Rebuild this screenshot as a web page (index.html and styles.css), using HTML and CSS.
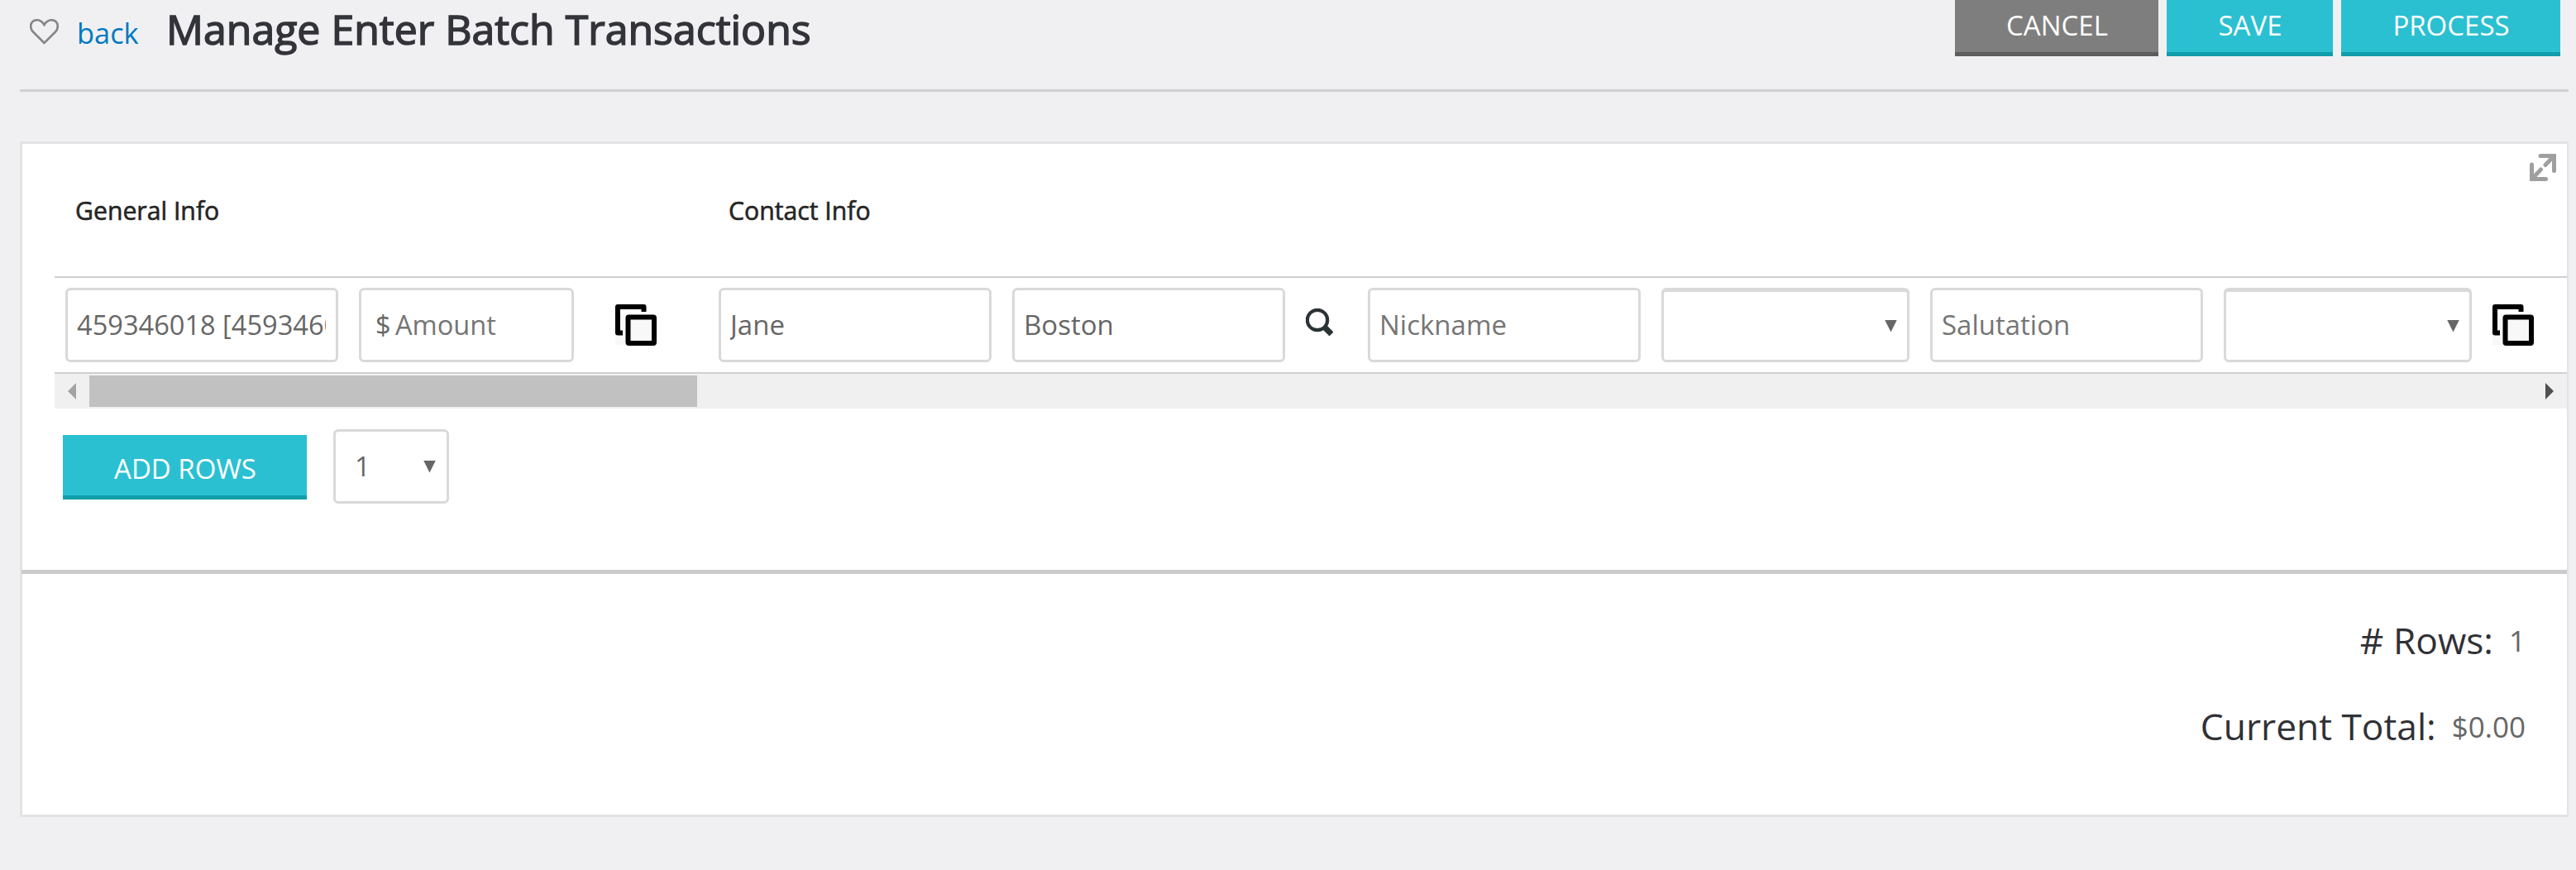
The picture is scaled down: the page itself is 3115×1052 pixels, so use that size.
FILE: index.html
```
<!DOCTYPE html>
<html lang="en">
<head>
<meta charset="utf-8">
<title>Manage Enter Batch Transactions</title>
<link rel="stylesheet" href="styles.css">
</head>
<body>
<svg class="defs" aria-hidden="true">
  <symbol id="copy" viewBox="0 0 50 50">
    <rect x="0" y="12" width="50" height="37" fill="#f8f8f8"/>
    <path d="M34.5 9V3H3v31.5h6" fill="none" stroke="#000" stroke-width="6" stroke-linejoin="round"/>
    <rect x="15.500" y="15.500" width="31.500" height="31.500" rx="1" fill="#f8f8f8" stroke="#000" stroke-width="6"/>
  </symbol>
</svg>
<header class="header">
  <svg class="heart" viewBox="0 0 35 31"><path d="M17.500 29 4 15.500C1.500 13 1.200 10.500 1.200 8.500 1.200 4.500 4 1.200 8.500 1.200c4.500 0 7 2.300 9 5.800 2-3.500 4.500-5.800 9-5.800 4.500 0 7.300 3.300 7.300 7.300 0 2-.3 4.500-2.800 7z"/></svg>
  <a class="back">back</a>
  <h1 class="title">Manage Enter Batch Transactions</h1>
  <div class="actions">
    <button class="btn btn-grey cancel">CANCEL</button>
    <button class="btn save">SAVE</button>
    <button class="btn process">PROCESS</button>
  </div>
</header>
<main class="card">
  <div class="groups">
    <span class="group-first">General Info</span>
    <span class="group-second">Contact Info</span>
    <svg class="expand" viewBox="0 0 32 33"><path d="M13 2.500h16.500v18M29 3 19 13.500M2.500 13v17.500h17M3 30 13.500 19"/><path class="tips" d="M20 0h12v12zM0 21v12h12z"/></svg>
  </div>
  <div class="row">
    <div class="field account"><span>459346018 [4593460</span></div>
    <div class="field amount"><span>$</span><span class="hint">Amount</span></div>
    <svg class="copy copy-first"><use href="#copy"/></svg>
    <div class="field"><span>Jane</span></div>
    <div class="field"><span>Boston</span></div>
    <svg class="search" viewBox="0 0 33 33"><path class="handle" d="m22 22 9 9"/><circle cx="14" cy="14" r="12.200"/></svg>
    <div class="field"><span class="hint">Nickname</span></div>
    <div class="field select"><i class="caret"></i></div>
    <div class="field"><span class="hint">Salutation</span></div>
    <div class="field select"><i class="caret"></i></div>
    <svg class="copy"><use href="#copy"/></svg>
  </div>
  <div class="scrollbar">
    <i class="arrow arrow-left"></i>
    <div class="thumb"></div>
    <i class="arrow arrow-right"></i>
  </div>
  <div class="add">
    <button class="btn add-rows">ADD ROWS</button>
    <div class="field count"><span>1</span><i class="caret"></i></div>
  </div>
  <div class="totals">
    <div class="total"><span class="label"># Rows:</span><span>1</span></div>
    <div class="total"><span class="label">Current Total:</span><span>$0.00</span></div>
  </div>
</main>
</body>
</html>
```
FILE: styles.css
```
* { box-sizing: border-box; }
body {
  margin: 0;
  padding: 0 9px 0 24px;
  background: #f0f0f2;
  font: 33px "Open Sans", sans-serif;
  color: #666;
}
svg { display: block; flex: none; }
.defs { width: 0; height: 0; position: absolute; }

.header {
  display: flex;
  align-items: flex-start;
  height: 111px;
  border-bottom: 3px solid #cfcfd2;
}
.heart {
  width: 35px;
  height: 31px;
  margin: 23px 0 0 12px;
  fill: none;
  stroke: #868686;
  stroke-width: 2.6;
}
.back {
  width: 108px;
  margin-left: 22px;
  font-size: 34.4px;
  line-height: 80px;
  color: #0079c1;
}
.title {
  margin: 0;
  font-size: 50px;
  font-weight: 400;
  line-height: 70px;
  color: #33343a;
  -webkit-text-stroke: 1.5px #33343a;
}
.actions {
  display: flex;
  gap: 10px;
  margin: 0 10px 0 auto;
}
.btn {
  height: 68px;
  padding: 0;
  border: 0;
  border-bottom: 5px solid #129dab;
  background: #2ac0d1;
  color: #fff;
  font: 33px/60px "Open Sans", sans-serif;
}
.btn-grey { background: #7e7e7e; border-color: #5e5e5e; }
.actions .btn { padding: 0 0 2px 1px; }
.cancel { width: 246px; }
.save { width: 201px; }
.process { width: 265px; }

.card {
  height: 817px;
  margin-top: 60px;
  border: 3px solid #e3e3e5;
  border-right-width: 2px;
  background: #fff;
}
.groups {
  display: flex;
  align-items: center;
  height: 162px;
  margin-left: 39px;
  padding: 0 13px 0 25px;
  border-bottom: 2px solid #d0d0d2;
  font-size: 30.2px;
  color: #252525;
  -webkit-text-stroke: .6px #252525;
}
.group-first { width: 790px; }
.expand {
  align-self: flex-start;
  width: 32px;
  height: 33px;
  margin: 12px 0 0 auto;
  fill: none;
  stroke: #9f9f9f;
  stroke-width: 5;
  stroke-linecap: round;
}
.tips { fill: #9f9f9f; stroke: none; }

.row {
  display: flex;
  align-items: center;
  gap: 25px;
  height: 116px;
  margin-left: 39px;
  padding-left: 13px;
  border-bottom: 2px solid #d0d0d2;
}
.field {
  display: flex;
  align-items: center;
  flex: none;
  width: 330px;
  height: 90px;
  padding: 0 12px 0 11px;
  border: 3px solid #d9d9d9;
  border-radius: 6px;
  background: #fff;
}
.field span {
  flex: 1;
  overflow: hidden;
  white-space: nowrap;
  line-height: 82px;
}
.field .hint { color: #757575; }
.account { font-size: 32.6px; }
.amount { width: 260px; padding-left: 17px; font-size: 32.6px; }
.amount span:first-child { flex: 0 0 24px; }
.select { width: 300px; border-top-width: 5px; }
.caret {
  width: 15px;
  height: 15px;
  margin-left: auto;
  background: #666;
  clip-path: polygon(0 0, 100% 0, 50% 100%);
}
.copy { width: 50px; height: 50px; }
.copy-first { margin: 0 50px 0 25px; }
.search {
  width: 33px;
  height: 33px;
  margin: -7px 17px 0 0;
  fill: none;
  stroke: #2b3335;
  stroke-width: 4.2;
}
.handle { stroke-width: 7; }

.scrollbar {
  display: flex;
  align-items: center;
  height: 42px;
  margin-left: 39px;
  padding: 0 16px;
  background: #f0f0f0;
}
.thumb { width: 735px; height: 38px; margin-left: 16px; background: #c1c1c1; }
.arrow { width: 10px; height: 20px; }
.arrow-left { background: #a3a3a3; clip-path: polygon(0 50%, 100% 0, 100% 100%); }
.arrow-right { margin-left: auto; background: #505050; clip-path: polygon(0 0, 100% 50%, 0 100%); }

.add {
  display: flex;
  align-items: flex-start;
  height: 195px;
  padding: 25px 0 0 49px;
}
.add-rows { width: 295px; height: 78px; margin-top: 7px; padding: 8px 0 0 1px; }
.count { width: 140px; margin-left: 32px; padding: 0 13px 0 23px; }

.totals {
  margin-left: -1px;
  padding: 28px 50px 0 0;
  border-top: 5px solid #cbcbcb;
}
.total {
  display: flex;
  justify-content: flex-end;
  align-items: center;
  gap: 19px;
  height: 104px;
  font-size: 35px;
}
.label { font-size: 44.3px; color: #303136; }
```
